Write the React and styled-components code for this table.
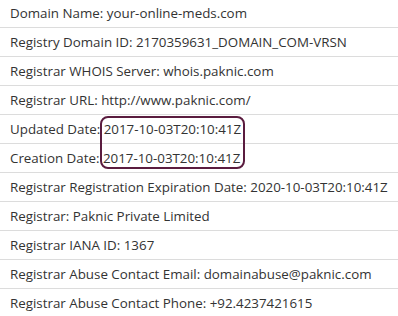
import React from "react";
import styled, { createGlobalStyle } from "styled-components";

const GlobalStyle = createGlobalStyle`
  body {
    margin: 0;
    background: #ffffff;
    font-family: "Open Sans", "Liberation Sans", sans-serif;
  }
`;

const Container = styled.div`
  position: relative;
  width: 398px;
  height: 316px;
  overflow: hidden;
  background: #ffffff;
`;

const List = styled.div`
  display: flex;
  flex-direction: column;
  margin-top: -1px;
`;

const Row = styled.div`
  height: 28px;
  display: flex;
  align-items: center;
  padding: 0 10px;
  border-bottom: 1px solid #dcdcdc;
  font-size: 13.35px;
  color: #333333;
  white-space: nowrap;
`;

const Highlight = styled.div`
  position: absolute;
  left: 100px;
  top: 116px;
  width: 141px;
  height: 49px;
  border: 2px solid #5a1c3f;
  border-radius: 8px;
`;

const rows = [
  "Domain Name: your-online-meds.com",
  "Registry Domain ID: 2170359631_DOMAIN_COM-VRSN",
  "Registrar WHOIS Server: whois.paknic.com",
  "Registrar URL: http://www.paknic.com/",
  "Updated Date: 2017-10-03T20:10:41Z",
  "Creation Date: 2017-10-03T20:10:41Z",
  "Registrar Registration Expiration Date: 2020-10-03T20:10:41Z",
  "Registrar: Paknic Private Limited",
  "Registrar IANA ID: 1367",
  "Registrar Abuse Contact Email: domainabuse@paknic.com",
  "Registrar Abuse Contact Phone: +92.4237421615",
];

const App = () => {
  return (
    <>
      <GlobalStyle />
      <Container>
        <List>
          {rows.map((text) => (
            <Row key={text}>{text}</Row>
          ))}
        </List>
        <Highlight />
      </Container>
    </>
  );
};

export default App;
